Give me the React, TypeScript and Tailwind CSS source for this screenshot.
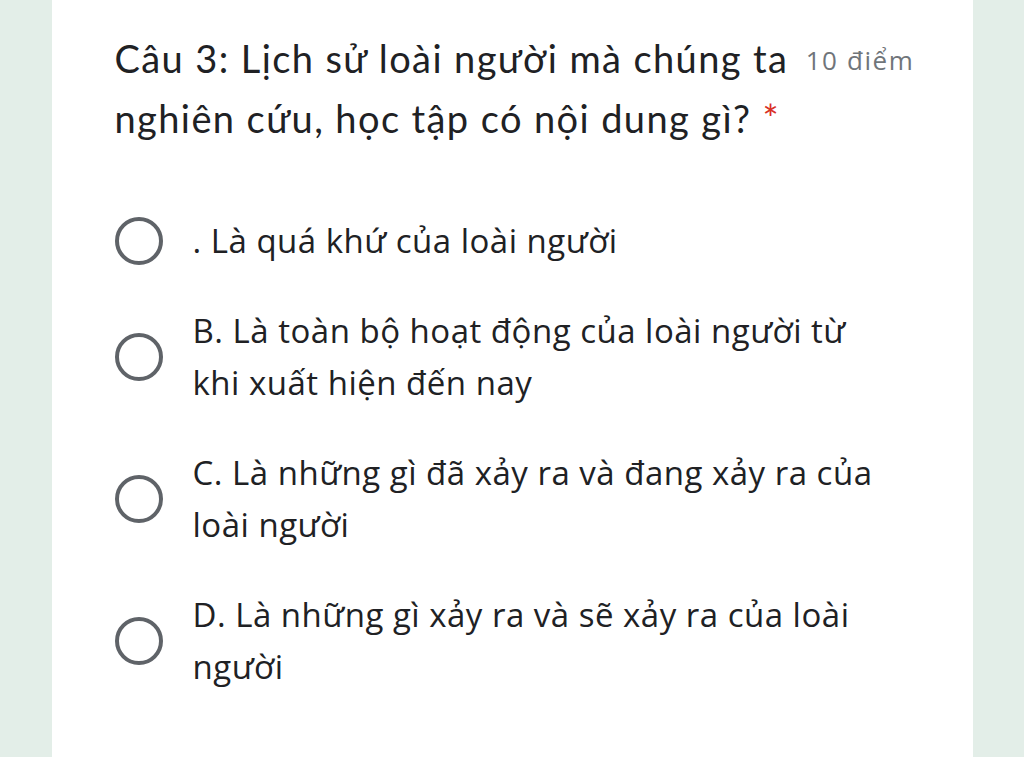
const options = [
  '. Là quá khứ của loài người',
  'B. Là toàn bộ hoạt động của loài người từ khi xuất hiện đến nay',
  'C. Là những gì đã xảy ra và đang xảy ra của loài người',
  'D. Là những gì xảy ra và sẽ xảy ra của loài người',
]

function Radio() {
  return (
    <div className="w-[48px] h-[48px] shrink-0 rounded-full border-[4px] border-[#5f6368]" />
  )
}

export default function App() {
  return (
    <div className="w-[1024px] h-[757px] overflow-hidden bg-[#e3eee8] flex justify-center">
      <div className="w-[921px] h-full bg-white pl-[63px] pr-[58px] pt-[28px]">
        <div className="flex items-start justify-between">
          <h1 className="w-[685px] text-[#202124] text-[38px] leading-[60px] tracking-[1.4px] font-['Lato','Noto_Sans',sans-serif]">
            Câu 3: Lịch sử loài người mà chúng ta nghiên cứu, học tập có nội dung gì?{' '}
            <span className="text-[#d93025]">*</span>
          </h1>
          <span className="mt-[14px] text-[26px] leading-[36px] tracking-[1.6px] text-[#70757a] whitespace-nowrap font-['Open_Sans',sans-serif]">
            10 điểm
          </span>
        </div>
        <div className="mt-[67px] flex flex-col gap-[38px] font-['Open_Sans',sans-serif]">
          {options.map((o) => (
            <div key={o} className="flex items-center">
              <Radio />
              <p className="ml-[30px] w-[700px] text-[33px] leading-[52px] tracking-[0.5px] text-[#202124]">{o}</p>
            </div>
          ))}
        </div>
      </div>
    </div>
  )
}
